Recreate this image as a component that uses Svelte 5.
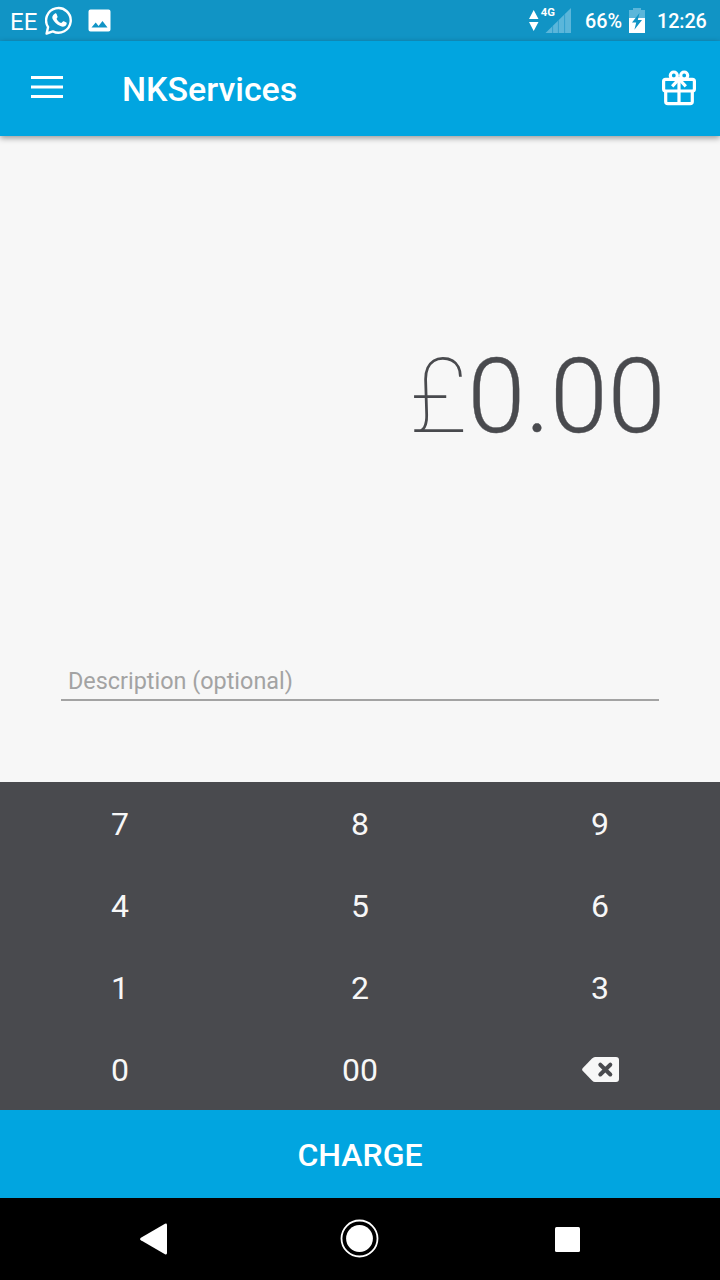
<script>
  const keys = ['7', '8', '9', '4', '5', '6', '1', '2', '3', '0', '00'];
</script>

<div class="screen">
  <header class="status">
    <span class="carrier">EE</span>
    <svg class="whatsapp" width="28" height="30" viewBox="0 0 28 30">
      <path d="M3.1 21.1A12.3 12.3 0 1 1 7.9 25.4L1.6 27.5Z" fill="none" stroke="#fff" stroke-width="2.4" stroke-linejoin="round" />
      <path d="M9.7 7.8C10.5 7.1 11.3 7.3 11.6 8.1L12.5 10.4C12.8 11.2 12.2 11.8 11.5 12.7C12.6 14.9 14 16.2 16.3 17.1L17.9 15.4C18.3 15 18.8 15.1 19.3 15.4L21.4 16.6C22 17 21.7 18.3 21.2 19.1C19.9 20.8 17.7 21 15.4 20.1C11.6 18.6 9.1 16.1 7.5 12.8C6.8 10.9 7.8 8.8 9.7 7.8Z" fill="#fff" />
    </svg>
    <svg class="photo" width="23" height="23" viewBox="0 0 23 23">
      <path transform="translate(.5 .5)" fill="#fff" fill-rule="evenodd" d="M2 0H20Q22 0 22 2V20Q22 22 20 22H2Q0 22 0 20V2Q0 0 2 0ZM3 18H19L14 11.4L10.1 16.5L7.2 13.1Z" />
    </svg>
    <svg class="signal" width="44" height="27" viewBox="0 0 44 27">
      <path fill="#fff" d="M4.7 3L9.5 12H0ZM0 15H9.5L4.7 24Z" />
      <path fill="#5bb6da" d="M16.5 26L42 1V26Z" />
      <path d="M23.6 19V26M29.4 13V26M35.6 7V26" stroke="#319fcd" stroke-width="1" />
      <text x="11.8" y="9" font-size="11.3" font-weight="700" fill="#fff">4G</text>
    </svg>
    <span class="battery-text">66%</span>
    <svg class="battery" width="16" height="25" viewBox="0 0 16 25">
      <path fill="#5bb6da" d="M0 2H4V0H12V2H16V10H0Z" />
      <path fill="#fff" d="M0 10H16V25H0Z" />
      <path fill="#1194c5" d="M10.5 5L3 14.5H7.2L5.4 21.8L13 12H8.8Z" />
    </svg>
    <time>12:26</time>
  </header>

  <div class="appbar">
    <svg class="menu" width="32" height="22" viewBox="0 0 32 22"><path d="M0 1.5H32M0 11H32M0 20.5H32" stroke="#fff" stroke-width="3" /></svg>
    <h1>NKServices</h1>
    <svg class="gift" width="34" height="36" viewBox="0 0 34 36" fill="none" stroke="#fff" stroke-width="3.2" stroke-linejoin="round">
      <rect x="1.6" y="9.3" width="30.8" height="11.7" rx="2" />
      <path d="M3.7 21V31.4Q3.7 33.6 5.9 33.6H28.1Q30.3 33.6 30.3 31.4V21M17 9V33" />
      <circle cx="11.8" cy="5.5" r="3.5" />
      <circle cx="22.2" cy="5.5" r="3.5" />
      <path d="M15 7.7L17 9.7L19 7.7M17 9L10.2 16.4M17 9L23.8 16.4" />
    </svg>
  </div>

  <main>
    <div class="amount"><span class="currency">£</span>0.00</div>
    <div class="field"><input aria-label="Description" placeholder="Description (optional)" /></div>
  </main>

  <div class="keypad">
    {#each keys as key}
      <button>{key}</button>
    {/each}
    <button aria-label="Delete">
      <svg width="38" height="26" viewBox="0 0 38 26">
        <path fill="#f7f7f7" d="M13 0H34Q37 0 37 3V22Q37 25 34 25H13Q11.5 25 10 23.5L.6 13.8Q-.4 12.5 .6 11.2L10 1.5Q11.5 0 13 0Z" />
        <path d="M18.3 7.7L28.3 17.5M28.3 7.7L18.3 17.5" stroke="#494a4e" stroke-width="4" stroke-linecap="round" />
      </svg>
    </button>
  </div>
  <button class="charge">CHARGE</button>

  <nav>
    <svg class="back" width="28" height="32" viewBox="0 0 28 32"><path fill="#fff" d="M25 .7Q27 0 27 2V30Q27 32 25 31.2L.9 17.3Q-.8 16 .9 14.7Z" /></svg>
    <svg class="home" width="39" height="39" viewBox="0 0 39 39"><circle cx="19.5" cy="19.5" r="18" fill="none" stroke="#fff" stroke-width="1.8" /><circle cx="19.5" cy="19.5" r="13.4" fill="#fff" /></svg>
    <svg class="recent" width="25" height="25" viewBox="0 0 25 25"><rect width="25" height="25" rx="1.5" fill="#fff" /></svg>
  </nav>
</div>

<style>
  :global(body) { margin: 0; }
  .screen {
    width: 720px;
    height: 1280px;
    display: flex;
    flex-direction: column;
    overflow: hidden;
    background: #f7f7f7;
    font-family: Roboto, sans-serif;
    color: #fff;
  }
  svg { display: block; flex: none; }
  button { border: 0; padding: 0; margin: 0; font-family: inherit; color: #fff; }
  .status {
    height: 41px;
    flex: none;
    box-sizing: border-box;
    display: flex;
    align-items: flex-start;
    padding-left: 10px;
    background: #1194c5;
    white-space: nowrap;
  }
  .carrier { width: 35px; font-size: 24px; line-height: 28px; margin-top: 8px; }
  .whatsapp { margin-top: 6px; }
  .photo { margin: 9px 0 0 15px; }
  .signal { margin: 7px 0 0 418px; }
  .battery-text, time { font-size: 19.8px; font-weight: 500; line-height: 24px; margin-top: 10px; }
  .battery-text { width: 44px; margin-left: 12px; }
  .battery { margin-top: 8px; }
  time { margin-left: 12px; letter-spacing: -.1px; }
  .appbar {
    height: 95px;
    flex: none;
    display: flex;
    align-items: flex-start;
    position: relative;
    background: #01a5e0;
    box-shadow: 0 2px 6px rgba(0, 0, 0, .4);
  }
  .menu { margin: 35px 0 0 31px; }
  h1 { margin: 28px 0 0 59px; width: 540px; font-size: 34px; line-height: 40px; font-weight: 500; letter-spacing: -.05px; }
  .gift { margin-top: 29px; }
  main { flex: 1; display: flex; flex-direction: column; }
  .amount {
    margin-top: 200px;
    padding-right: 54.5px;
    text-align: right;
    font-size: 104px;
    line-height: 122px;
    font-weight: 300;
    color: #494a4e;
    -webkit-text-stroke: .35px #494a4e;
  }
  .currency { font-weight: 100; -webkit-text-stroke: 0; }
  .field { margin: 202px 61px 0; border-bottom: 2px solid #a3a3a3; }
  input {
    display: block;
    width: 100%;
    height: 39px;
    box-sizing: border-box;
    border: 0;
    outline: 0;
    padding: 3px 7px 0;
    background: transparent;
    font: 400 23.4px/28px Roboto, sans-serif;
  }
  input::placeholder { color: #a3a3a3; opacity: 1; }
  .keypad {
    height: 328px;
    flex: none;
    display: grid;
    grid-template: repeat(4, 82px) / repeat(3, 240px);
    background: #494a4e;
  }
  .keypad button {
    display: flex;
    align-items: center;
    justify-content: center;
    background: none;
    color: #f7f7f7;
    font-size: 32px;
    padding-top: 2px;
  }
  .keypad button:last-child { padding: 2px 0 0 2px; }
  .charge { height: 88px; flex: none; background: #01a5e0; font-size: 32px; font-weight: 500; padding-top: 2px; }
  nav { height: 82px; flex: none; display: flex; background: #000; }
  .back { margin: 25px 0 0 140px; }
  .home { margin: 21px 0 0 172px; }
  .recent { margin: 29px 0 0 176px; }
</style>
